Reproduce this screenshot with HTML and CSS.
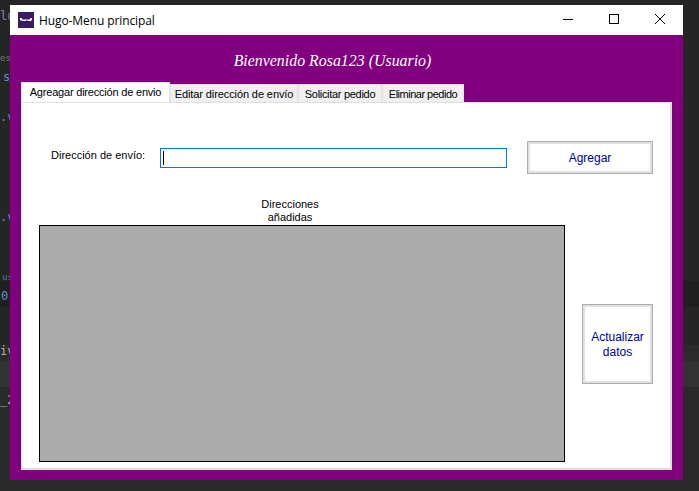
FILE: index.html
```html
<!DOCTYPE html>
<html lang="es">
<head>
<meta charset="utf-8">
<title>Hugo-Menu principal</title>
<link rel="stylesheet" href="styles.css">
</head>
<body>
<div class="desktop">
  <div class="band band-a"></div>
  <div class="band band-b"></div>
  <div class="band band-c"></div>
  <div class="band band-d"></div>
  <span class="frag frag-1">lu</span>
  <span class="frag frag-2">es</span>
  <span class="frag frag-3">s</span>
  <span class="frag frag-4">.v</span>
  <span class="frag frag-6">.v</span>
  <span class="frag frag-7">us</span>
  <span class="frag frag-8">01</span>
  <span class="frag frag-9">iv</span>
  <span class="frag frag-10">_2</span>
  <div class="window">
    <header class="titlebar">
      <svg class="app-icon" width="16" height="16" viewBox="0 0 16 16">
        <rect width="16" height="16" fill="#3a1a63"/>
        <path d="M2 6h1.500l1 1.500h7l1-1.500H14v1.500l-1 1.500h-2.500l-.5-.5H8l-.5.500h-3L2 8z" fill="#fff"/>
      </svg>
      <span class="title-text">Hugo-Menu principal</span>
      <div class="controls">
        <svg class="ctl" width="46" height="30" viewBox="0 0 46 30"><path d="M18 14.500h10" stroke="#000" fill="none"/></svg>
        <svg class="ctl" width="46" height="30" viewBox="0 0 46 30"><rect x="18.500" y="9.500" width="9" height="9" stroke="#000" fill="none"/></svg>
        <svg class="ctl" width="46" height="30" viewBox="0 0 46 30"><path d="M18 9l10 10M28 9L18 19" stroke="#000" fill="none"/></svg>
      </div>
    </header>
    <main class="client">
      <h1 class="welcome">Bienvenido Rosa123 (Usuario)</h1>
      <nav class="tabs">
        <div class="tab tab-active">Agreagar dirección de envio</div>
        <div class="tab tab-2">Editar dirección de envío</div>
        <div class="tab tab-3">Solicitar pedido</div>
        <div class="tab tab-4">Eliminar pedido</div>
      </nav>
      <section class="panel">
        <div class="form-row">
          <label class="field-label" for="dir">Dirección de envío:</label>
          <div class="field" id="dir"><span class="caret"></span></div>
          <button class="btn btn-add" type="button">Agregar</button>
        </div>
        <div class="list-area">
          <div class="list-col">
            <div class="list-title">Direcciones<br>añadidas</div>
            <div class="list-box"></div>
          </div>
          <button class="btn btn-refresh" type="button">Actualizar<br>datos</button>
        </div>
      </section>
    </main>
  </div>
</div>
</body>
</html>
```

FILE: styles.css
```css
* { box-sizing: border-box; }
html, body { margin: 0; padding: 0; }
body { width: 699px; height: 491px; overflow: hidden; background: #252525; }
.desktop { position: relative; width: 699px; height: 491px; background: #252525; overflow: hidden; }
.band { position: absolute; left: 0; right: 0; }
.band-a { top: 281px; height: 26px; background: #1f1f1f; }
.band-b { top: 345px; height: 16px; background: #2b2b2b; }
.band-c { top: 361px; height: 26px; background: #333; }
.band-d { top: 387px; height: 104px; background: #2a2a2a; }
.frag { position: absolute; left: 0; font: 12px/14px "DejaVu Sans Mono", monospace; color: #8f8f8f; }
.frag-1 { top: 9px; color: #7d82b8; }
.frag-2 { top: 51px; font-size: 9px; color: #777; }
.frag-3 { top: 70px; left: 3px; color: #5f8fc8; }
.frag-4 { top: 110px; color: #5f8fc8; }
.frag-6 { top: 210px; color: #5f8fc8; }
.frag-7 { top: 270px; left: 2px; font-size: 9px; color: #5f7488; }
.frag-8 { top: 289px; left: 1px; color: #5f8fc8; }
.frag-9 { top: 344px; color: #b0b0b0; }
.frag-10 { top: 393px; color: #b0b0b0; }

.window { position: absolute; left: 10px; top: 5px; width: 673px; height: 475px; display: flex; flex-direction: column; background: #800080; }
.titlebar { height: 30px; flex: none; background: #fff; display: flex; align-items: center; padding-left: 8px; }
.app-icon { flex: none; }
.title-text { margin-left: 5px; font: 12px "Open Sans", "Noto Sans", sans-serif; letter-spacing: -0.1px; color: #000; }
.controls { margin-left: auto; display: flex; }
.ctl { display: block; }

.client { flex: 1; padding: 0 11px 10px; display: flex; flex-direction: column; }
.welcome { margin: 0; height: 47px; padding: 17px 28px 0 0; text-align: center; font: italic 400 15.900px/18px "Liberation Serif", serif; color: #fff; }

.tabs { display: flex; align-items: flex-end; height: 20px; flex: none; font: 11px/18px "Liberation Sans", Arial, sans-serif; color: #000; }
.tab { height: 18px; background: #f0f0f0; border: 1px solid #e3e3e3; border-bottom: 0; white-space: nowrap; text-align: center; }
.tab-active { height: 20px; width: 149px; background: #fff; border-color: #e3e3e3; line-height: 18px; letter-spacing: -0.2px; }
.tab-2 { width: 128px; letter-spacing: -0.1px; }
.tab-3 { width: 84px; letter-spacing: -0.3px; }
.tab-4 { width: 82px; letter-spacing: -0.5px; }

.panel { flex: 1; background: #fff; border: 1px solid #dfdfdf; border-right-width: 2px; border-bottom-width: 2px; display: flex; flex-direction: column; padding: 38px 17px 5px 17px; font: 11px/14px "Liberation Sans", Arial, sans-serif; color: #000; }
.form-row { display: flex; align-items: center; height: 33px; flex: none; padding-left: 12px; }
.field-label { width: 109px; flex: none; margin-top: -6px; }
.field { width: 347px; height: 20px; flex: none; border: 1px solid #0078d7; background: #fff; display: flex; align-items: center; padding-left: 2px; }
.caret { width: 1px; height: 14px; background: #000; }
.btn { background: #fff; border: 1px solid #adadad; box-shadow: inset 0 0 0 2px #e1e1e1; font: 12px/14px "Liberation Sans", Arial, sans-serif; color: #0000a0; padding: 0; }
.btn-add { width: 127px; height: 33px; margin-left: 20px; }
.list-area { flex: 1; display: flex; align-items: flex-start; margin-top: 24px; }
.list-col { width: 526px; flex: none; display: flex; flex-direction: column; }
.list-title { height: 26px; padding-right: 24px; text-align: center; line-height: 13px; color: #000; margin-bottom: 1px; }
.list-box { height: 237px; background: #ababab; border: 1px solid #000; }
.btn-refresh { width: 71px; height: 80px; margin: 106px 0 0 17px; padding-top: 2px; line-height: 15px; }
```
